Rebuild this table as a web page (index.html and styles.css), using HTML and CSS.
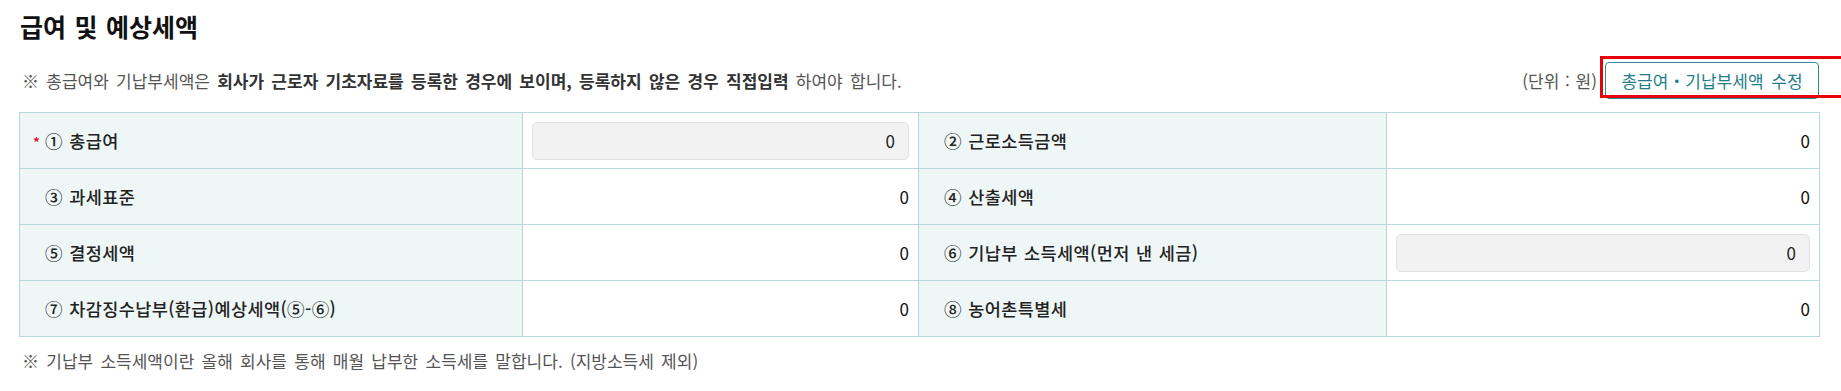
FILE: index.html
```html
<!DOCTYPE html>
<html lang="ko">
<head>
<meta charset="utf-8">
<title>급여 및 예상세액</title>
<link rel="stylesheet" href="styles.css">
</head>
<body>
<div class="page">
  <h2 class="title">급여 및 예상세액</h2>
  <div class="toolbar">
    <p class="notice">※ 총급여와 기납부세액은 <b>회사가 근로자 기초자료를 등록한 경우에 보이며, 등록하지 않은 경우 직접입력</b> 하여야 합니다.</p>
    <div class="actions">
      <span class="unit">(단위 : 원)</span>
      <span class="btn-wrap">
        <button class="btn" type="button">총급여・기납부세액 수정</button>
        <span class="highlight"></span>
      </span>
    </div>
  </div>
  <table class="grid">
    <colgroup>
      <col class="c1"><col class="c2"><col class="c3"><col class="c4">
    </colgroup>
    <tbody>
      <tr>
        <th><span class="req">*</span>① 총급여</th>
        <td><div class="field">0</div></td>
        <th>② 근로소득금액</th>
        <td class="num">0</td>
      </tr>
      <tr>
        <th>③ 과세표준</th>
        <td class="num">0</td>
        <th>④ 산출세액</th>
        <td class="num">0</td>
      </tr>
      <tr>
        <th>⑤ 결정세액</th>
        <td class="num">0</td>
        <th>⑥ 기납부 소득세액(먼저 낸 세금)</th>
        <td><div class="field">0</div></td>
      </tr>
      <tr>
        <th>⑦ 차감징수납부(환급)예상세액(⑤-⑥)</th>
        <td class="num">0</td>
        <th>⑧ 농어촌특별세</th>
        <td class="num">0</td>
      </tr>
    </tbody>
  </table>
  <p class="footnote">※ 기납부 소득세액이란 올해 회사를 통해 매월 납부한 소득세를 말합니다. (지방소득세 제외)</p>
</div>
</body>
</html>
```
FILE: styles.css
```css
html, body {
  margin: 0;
  padding: 0;
  background: #fff;
  overflow: hidden;
}
body {
  font-family: "Noto Sans CJK KR", "Noto Sans", sans-serif;
  color: #222;
}
.page {
  padding: 10px 22px 0 19px;
  width: 1800px;
}
.title {
  margin: 0 0 0 1px;
  font-size: 25px;
  line-height: 33px;
  font-weight: 700;
  word-spacing: 1.5px;
  color: #111;
}
.toolbar {
  margin-top: 19px;
  display: flex;
  align-items: center;
  justify-content: space-between;
  height: 37px;
}
.notice {
  margin: 0 0 0 3px;
  font-size: 17px;
  word-spacing: 2.5px;
  color: #555;
}
.notice b {
  color: #333;
  font-weight: 700;
}
.actions {
  display: flex;
  align-items: center;
  gap: 8px;
}
.unit {
  font-size: 17px;
  word-spacing: 1px;
  color: #555;
}
.btn-wrap {
  position: relative;
  display: block;
}
.btn {
  display: block;
  height: 37px;
  width: 214px;
  padding: 0;
  border: 1px solid #2a8c95;
  border-radius: 4px;
  background: #fff;
  color: #1f7f89;
  font-family: "Noto Sans CJK KR", "Noto Sans", sans-serif;
  font-size: 17px;
  word-spacing: 3px;
}
.highlight {
  position: absolute;
  left: -5px;
  top: -6px;
  width: 260px;
  height: 36px;
  border: 3px solid #e8000b;
  pointer-events: none;
}
.grid {
  margin-top: 13px;
  width: 1800px;
  border-collapse: collapse;
  table-layout: fixed;
}
.c1 { width: 503px; }
.c2 { width: 396px; }
.c3 { width: 468px; }
.c4 { width: 433px; }
.grid th, .grid td {
  border: 1px solid #b5d8dc;
  height: 56px;
  box-sizing: border-box;
  font-size: 17px;
  padding: 0;
}
.grid th {
  background: #eef7f6;
  text-align: left;
  font-weight: 500;
  font-size: 17.5px;
  padding-left: 25px;
  letter-spacing: 0.4px;
  word-spacing: 1px;
  color: #222;
}
.grid td {
  padding: 0 9px 0 9px;
  text-align: right;
  color: #111;
}
.req {
  display: inline-block;
  width: 12px;
  margin-left: -12px;
  letter-spacing: 0;
  color: #e4002b;
  font-size: 14px;
}
.field {
  height: 38px;
  box-sizing: border-box;
  border: 1px solid #e2e2e2;
  border-radius: 5px;
  background: #f2f2f2;
  padding-right: 13px;
  display: flex;
  align-items: center;
  justify-content: flex-end;
  color: #222;
}
.footnote {
  margin: 11px 0 0 3px;
  font-size: 17px;
  word-spacing: 2.5px;
  color: #555;
}
```
